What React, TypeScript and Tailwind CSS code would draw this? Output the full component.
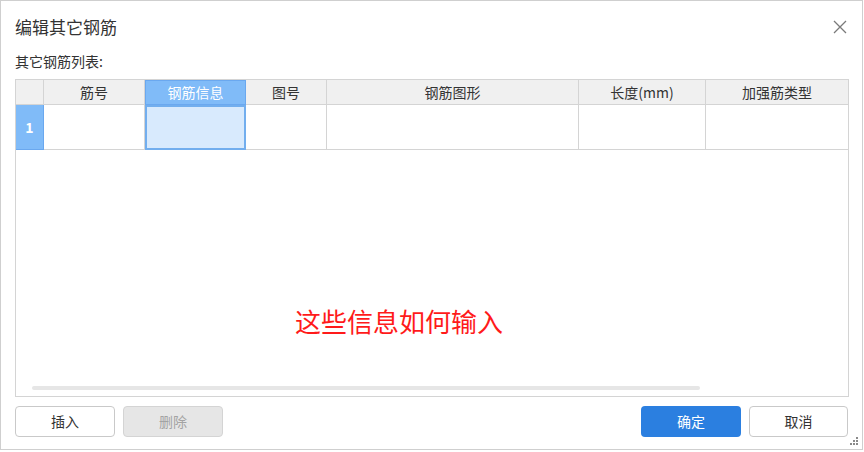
import React from 'react';

// ============================================================================
// Column definitions
// ============================================================================

const columns = [
  { key: 'no', label: '', width: 'w-[28px]' },
  { key: 'jin', label: '筋号', width: 'w-[101px]' },
  { key: 'info', label: '钢筋信息', width: 'w-[101px]', active: true },
  { key: 'tu', label: '图号', width: 'w-[81px]' },
  { key: 'shape', label: '钢筋图形', width: 'w-[252px]' },
  { key: 'len', label: '长度(mm)', width: 'w-[127px]' },
  { key: 'type', label: '加强筋类型', width: 'w-[142px]', last: true },
];

function CloseIcon() {
  return (
    <svg width="14" height="14" viewBox="0 0 14 14" className="text-[#7a7a7a]">
      <path d="M1 1 L13 13 M13 1 L1 13" stroke="currentColor" strokeWidth="1.3" fill="none" />
    </svg>
  );
}

function ResizeGrip() {
  const dots = [
    [6, 0],
    [3, 3],
    [6, 3],
    [0, 6],
    [3, 6],
    [6, 6],
  ];
  return (
    <svg width="8" height="8" viewBox="0 0 8 8" className="absolute right-[4px] bottom-[4px]">
      {dots.map(([x, y], i) => (
        <rect key={i} x={x} y={y} width="2" height="2" fill="#8a8a8a" />
      ))}
    </svg>
  );
}

export default function App() {
  return (
    <div className="w-[864px] h-[452px] bg-white font-['Noto_Sans_CJK_SC','Noto_Sans',sans-serif] text-[#333]">
      <div className="relative w-[863px] h-[450px] border border-[#cfcfcf] bg-white px-[14px] flex flex-col">
        {/* Title */}
        <div className="flex items-center justify-between pt-[15px]">
          <h2 className="text-[17px] leading-[22px] text-[#333]">编辑其它钢筋</h2>
          <button className="mr-[1px] p-0">
            <CloseIcon />
          </button>
        </div>

        {/* Label */}
        <p className="mt-[14px] text-[14px] leading-[18px] text-[#333]">其它钢筋列表:</p>

        {/* Table */}
        <div className="mt-[9px] w-[834px] h-[318px] border border-[#d4d4d4] flex flex-col">
          {/* Header */}
          <div className="flex h-[25px]">
            {columns.map((c) => (
              <div
                key={c.key}
                className={
                  c.active
                    ? `${c.width} h-[25px] flex items-center justify-center text-[14px] text-white bg-[#80bbf8] border border-[#6aa8ef]`
                    : `${c.width} h-[25px] flex items-center justify-center text-[14px] text-[#333] bg-[#f0f0f0] border-b border-[#d4d4d4] ${c.last ? '' : 'border-r'}`
                }
              >
                {c.label}
              </div>
            ))}
          </div>

          {/* Row 1 */}
          <div className="flex h-[45px]">
            {columns.map((c) => {
              if (c.key === 'no') {
                return (
                  <div
                    key={c.key}
                    className="w-[28px] h-[45px] flex items-center justify-center text-[14px] font-bold text-white bg-[#80bbf8] border-b border-r border-[#6aa8ef]"
                  >
                    1
                  </div>
                );
              }
              if (c.active) {
                return (
                  <div
                    key={c.key}
                    className="w-[101px] h-[45px] bg-[#d8eafd] border-2 border-[#72aeee]"
                  />
                );
              }
              return (
                <div
                  key={c.key}
                  className={`${c.width} h-[45px] border-b border-[#d4d4d4] ${c.last ? '' : 'border-r'}`}
                />
              );
            })}
          </div>

          {/* Empty body */}
          <div className="flex-1 flex flex-col">
            <p className="mt-[154px] ml-[279px] text-[26px] leading-[34px] text-[#ff1a1a]">这些信息如何输入</p>
            <div className="flex-1" />
            <div className="ml-[16px] mb-[6px] w-[668px] h-[4px] rounded-full bg-[#e6e6e6]" />
          </div>
        </div>

        {/* Footer buttons */}
        <div className="mt-[9px] flex items-center">
          <button className="w-[100px] h-[31px] rounded-[4px] border border-[#c9c9c9] bg-white text-[14px] text-[#333]">
            插入
          </button>
          <button className="ml-[8px] w-[100px] h-[31px] rounded-[4px] border border-[#d4d4d4] bg-[#e6e6e6] text-[14px] text-[#a3a3a3]">
            删除
          </button>
          <div className="flex-1" />
          <button className="w-[100px] h-[31px] rounded-[4px] bg-[#2b7fe0] text-[14px] text-white">
            确定
          </button>
          <button className="ml-[8px] w-[99px] h-[31px] rounded-[4px] border border-[#c9c9c9] bg-white text-[14px] text-[#333]">
            取消
          </button>
        </div>

        <ResizeGrip />
      </div>
    </div>
  );
}
